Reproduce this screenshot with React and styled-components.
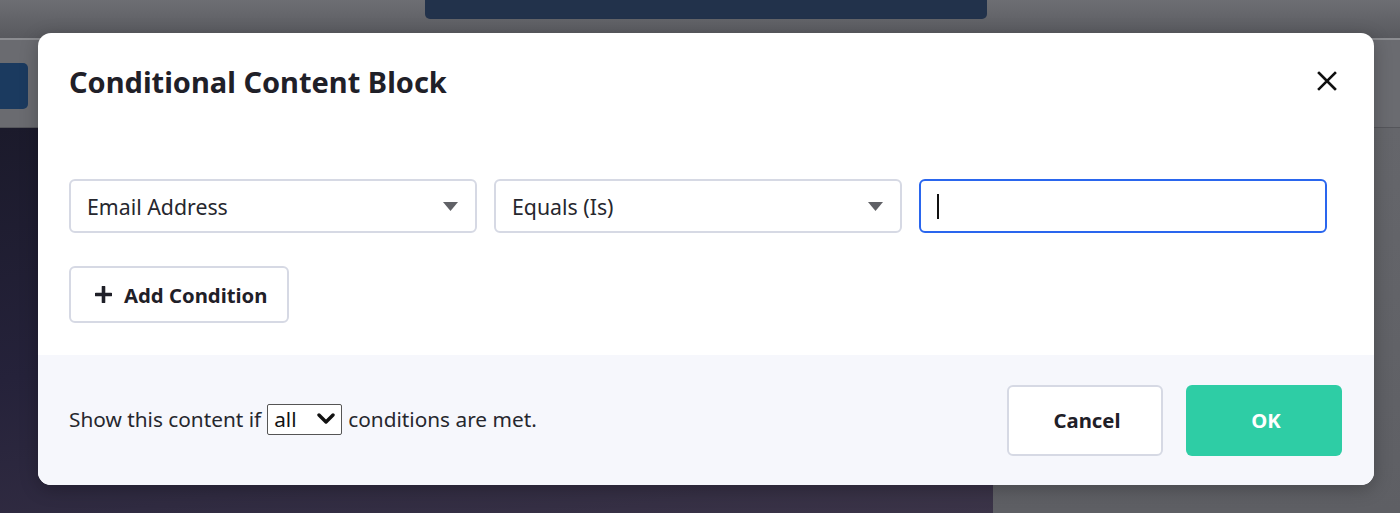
import React from "react";
import styled, { createGlobalStyle } from "styled-components";

const GlobalStyle = createGlobalStyle`
	html, body {
		margin: 0;
		padding: 0;
		width: 1400px;
		height: 513px;
		overflow: hidden;
		font-family: "Noto Sans", "Liberation Sans", sans-serif;
	}
	* {
		box-sizing: border-box;
	}
`;

const Page = styled.div`
	position: relative;
	width: 1400px;
	height: 513px;
	display: flex;
	flex-direction: column;
	background: #68696e;
`;

const TopBar = styled.div`
	height: 40px;
	display: flex;
	justify-content: center;
	padding-left: 12px;
	background: linear-gradient(180deg, #6d6e73 0%, #58595e 100%);
	border-bottom: 2px solid #8c8d91;
`;

const NavyTab = styled.div`
	width: 562px;
	height: 19px;
	background: #22324b;
	border-radius: 0 0 5px 5px;
`;

const ToolBar = styled.div`
	height: 88px;
	display: flex;
	align-items: center;
	background: #6a6b70;
	border-bottom: 1px solid #55565b;
`;

const ToolButton = styled.div`
	width: 28px;
	height: 46px;
	margin-top: 4px;
	background: #1b3a5f;
	border-radius: 0 5px 5px 0;
`;

const Workspace = styled.div`
	flex: 1;
	display: flex;
`;

const Canvas = styled.div`
	width: 993px;
	background: linear-gradient(170deg, #1b1a2b 0%, #25223a 45%, #3b3448 100%);
`;

const SidePanel = styled.div`
	flex: 1;
	background: linear-gradient(180deg, #65666b 0%, #5e5f64 100%);
`;

const Modal = styled.div`
	position: absolute;
	left: 38px;
	top: 33px;
	width: 1336px;
	height: 452px;
	display: flex;
	flex-direction: column;
	background: #fff;
	border-radius: 13px;
	overflow: hidden;
	box-shadow: 0 4px 18px rgba(0, 0, 0, 0.25);
	color: #1f2028;
`;

const Header = styled.div`
	height: 96px;
	display: flex;
	align-items: center;
	justify-content: space-between;
	padding: 0 36px 0 31px;
`;

const Title = styled.h2`
	margin: 0;
	font-size: 29px;
	font-weight: 700;
	letter-spacing: 0;
`;

const CloseButton = styled.button`
	width: 22px;
	height: 22px;
	padding: 0;
	border: none;
	background: none;
	display: flex;
	align-items: center;
	justify-content: center;
	cursor: pointer;
`;

const Body = styled.div`
	flex: 1;
	padding: 50px 47px 32px 31px;
	display: flex;
	flex-direction: column;
	align-items: flex-start;
	gap: 33px;
`;

const ConditionRow = styled.div`
	width: 100%;
	display: grid;
	grid-template-columns: repeat(3, 1fr);
	gap: 17px;
`;

const Field = styled.div`
	height: 54px;
	display: flex;
	align-items: center;
	justify-content: space-between;
	padding: 0 17px 0 16px;
	border: 2px solid ${(p) => (p.$focused ? "#2a66ee" : "#d6d9e4")};
	border-radius: 6px;
	background: #fff;
	font-size: 21.3px;
	color: #26272e;
`;

const Caret = styled.span`
	width: 2px;
	height: 25px;
	background: #111;
`;

const Button = styled.button`
	height: ${(p) => p.$height || 57}px;
	width: ${(p) => (p.$width ? `${p.$width}px` : "auto")};
	padding: 0 20px 0 24px;
	display: flex;
	align-items: center;
	justify-content: center;
	gap: 12px;
	border: ${(p) => (p.$primary ? "none" : "2px solid #d6d9e4")};
	border-radius: 6px;
	background: ${(p) => (p.$primary ? "#2ecda5" : "#fff")};
	color: ${(p) => (p.$primary ? "#fff" : "#1f2028")};
	font-family: inherit;
	font-size: 20.3px;
	font-weight: 700;
	cursor: pointer;
`;

const Footer = styled.div`
	height: 130px;
	display: flex;
	align-items: center;
	justify-content: space-between;
	padding: 0 32px 0 31px;
	background: #f6f7fc;
`;

const FooterText = styled.div`
	display: flex;
	align-items: center;
	gap: 6px;
	font-size: 20.8px;
	color: #26272e;
	margin-top: -2px;
`;

const MatchSelect = styled.div`
	width: 75px;
	height: 31px;
	display: flex;
	align-items: center;
	justify-content: space-between;
	padding: 0 6px 0 6px;
	border: 1px solid #555;
	border-radius: 2px;
	background: #fff;
	color: #111;
	font-size: 20.7px;
`;

const Actions = styled.div`
	display: flex;
	gap: 23px;
`;

function CaretDown() {
	return (
		<svg width="15" height="9" viewBox="0 0 15 9">
			<path d="M0 0 H15 L7.5 9 Z" fill="#606166" />
		</svg>
	);
}

function Chevron() {
	return (
		<svg width="18" height="12" viewBox="0 0 18 12">
			<path d="M2 2 L9 9 L16 2" fill="none" stroke="#111" strokeWidth="3.4" strokeLinecap="round" strokeLinejoin="round" />
		</svg>
	);
}

function CloseIcon() {
	return (
		<svg width="20" height="20" viewBox="0 0 20 20">
			<path d="M2 2 L18 18 M18 2 L2 18" stroke="#111" strokeWidth="2.6" strokeLinecap="square" />
		</svg>
	);
}

function PlusIcon() {
	return (
		<svg width="17" height="17" viewBox="0 0 17 17">
			<path d="M8.5 1 V16 M1 8.5 H16" stroke="#1f2028" strokeWidth="3.6" strokeLinecap="round" />
		</svg>
	);
}

export default function App() {
	return (
		<>
			<GlobalStyle />
			<Page>
				<TopBar>
					<NavyTab />
				</TopBar>
				<ToolBar>
					<ToolButton />
				</ToolBar>
				<Workspace>
					<Canvas />
					<SidePanel />
				</Workspace>

				<Modal>
					<Header>
						<Title>Conditional Content Block</Title>
						<CloseButton aria-label="Close">
							<CloseIcon />
						</CloseButton>
					</Header>
					<Body>
						<ConditionRow>
							<Field>
								Email Address
								<CaretDown />
							</Field>
							<Field>
								Equals (Is)
								<CaretDown />
							</Field>
							<Field $focused>
								<Caret />
							</Field>
						</ConditionRow>
						<Button>
							<PlusIcon />
							Add Condition
						</Button>
					</Body>
					<Footer>
						<FooterText>
							Show this content if
							<MatchSelect>
								all
								<Chevron />
							</MatchSelect>
							conditions are met.
						</FooterText>
						<Actions>
							<Button $width={156} $height={71}>Cancel</Button>
							<Button $width={156} $height={71} $primary>OK</Button>
						</Actions>
					</Footer>
				</Modal>
			</Page>
		</>
	);
}
